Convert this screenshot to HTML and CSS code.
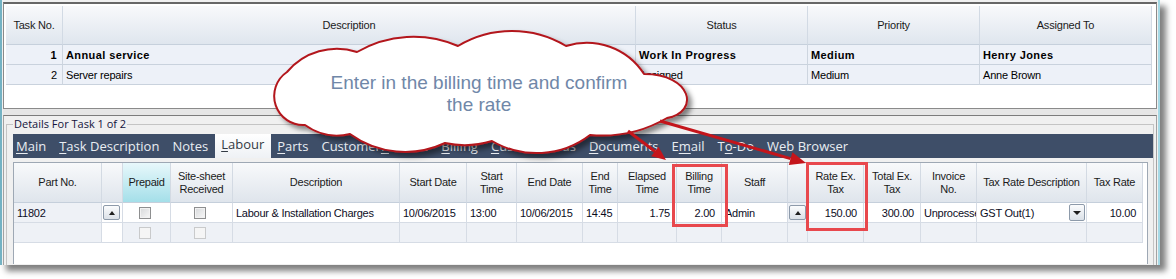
FILE: index.html
```html
<!DOCTYPE html>
<html>
<head>
<meta charset="utf-8">
<title>Task Details</title>
<link rel="stylesheet" href="styles.css">
</head>
<body>
<div class="stage">
  <div class="window">
    <div class="top-panel">
      <div class="tgrid">
        <div class="th">Task No.</div>
        <div class="th">Description</div>
        <div class="th">Status</div>
        <div class="th">Priority</div>
        <div class="th">Assigned To</div>
        <div class="td r b">1</div>
        <div class="td b">Annual service</div>
        <div class="td b">Work In Progress</div>
        <div class="td b">Medium</div>
        <div class="td b">Henry Jones</div>
        <div class="td r">2</div>
        <div class="td">Server repairs</div>
        <div class="td">Assigned</div>
        <div class="td">Medium</div>
        <div class="td">Anne Brown</div>
      </div>
    </div>
    <div class="splitter"></div>
    <div class="bottom-panel">
      <fieldset class="group">
        <legend>Details For Task 1 of 2</legend>
        <nav class="tabs">
          <span class="tab"><u>M</u>ain</span>
          <span class="tab"><u>T</u>ask Description</span>
          <span class="tab">Notes</span>
          <span class="tab active"><u>L</u>abour</span>
          <span class="tab"><u>P</u>arts</span>
          <span class="tab">Customer <u>R</u>eturns</span>
          <span class="tab"><u>B</u>illing</span>
          <span class="tab"><u>C</u>ustom Fields</span>
          <span class="tab"><u>D</u>ocuments</span>
          <span class="tab">E<u>m</u>ail</span>
          <span class="tab">T<u>o</u>-Do</span>
          <span class="tab">Web Browser</span>
        </nav>
        <div class="lgrid">
          <div class="lh">Part No.</div>
          <div class="lh"></div>
          <div class="lh sorted">Prepaid</div>
          <div class="lh">Site-sheet<br>Received</div>
          <div class="lh">Description</div>
          <div class="lh">Start Date</div>
          <div class="lh">Start<br>Time</div>
          <div class="lh">End Date</div>
          <div class="lh">End<br>Time</div>
          <div class="lh">Elapsed<br>Time</div>
          <div class="lh">Billing<br>Time</div>
          <div class="lh">Staff</div>
          <div class="lh"></div>
          <div class="lh">Rate Ex.<br>Tax</div>
          <div class="lh">Total Ex.<br>Tax</div>
          <div class="lh">Invoice<br>No.</div>
          <div class="lh">Tax Rate Description</div>
          <div class="lh">Tax Rate</div>

          <div class="lc shade">11802</div>
          <div class="lc btn"><span class="upbtn"></span></div>
          <div class="lc ctr"><span class="chk"></span></div>
          <div class="lc ctr"><span class="chk"></span></div>
          <div class="lc">Labour &amp; Installation Charges</div>
          <div class="lc">10/06/2015</div>
          <div class="lc">13:00</div>
          <div class="lc">10/06/2015</div>
          <div class="lc">14:45</div>
          <div class="lc r">1.75</div>
          <div class="lc r">2.00</div>
          <div class="lc">Admin</div>
          <div class="lc btn shade"><span class="upbtn"></span></div>
          <div class="lc r">150.00</div>
          <div class="lc r">300.00</div>
          <div class="lc clip">Unprocessed</div>
          <div class="lc dd"><span>GST Out(1)</span><span class="ddbtn"></span></div>
          <div class="lc r">10.00</div>

          <div class="lc shade"></div>
          <div class="lc"></div>
          <div class="lc ctr shade"><span class="chk off"></span></div>
          <div class="lc ctr shade"><span class="chk off"></span></div>
          <div class="lc shade"></div>
          <div class="lc shade"></div>
          <div class="lc shade"></div>
          <div class="lc shade"></div>
          <div class="lc shade"></div>
          <div class="lc shade"></div>
          <div class="lc shade"></div>
          <div class="lc shade"></div>
          <div class="lc shade"></div>
          <div class="lc shade"></div>
          <div class="lc shade"></div>
          <div class="lc shade"></div>
          <div class="lc shade"></div>
          <div class="lc shade"></div>
        </div>
      </fieldset>
    </div>
  </div>

  <svg class="overlay" width="1176" height="279" viewBox="0 0 1176 279">
    <defs>
      <filter id="shadow" x="-10%" y="-10%" width="130%" height="140%">
        <feDropShadow dx="4" dy="4" stdDeviation="2.5" flood-color="#000" flood-opacity="0.45"/>
      </filter>
    </defs>
    <path class="cloud" filter="url(#shadow)"
      d="M 287 72
         A 65 65 0 0 1 357 52
         A 112 112 0 0 1 458 46
         A 105 105 0 0 1 566 46
         A 68 68 0 0 1 644 74
         C 692 74 700 112 667 118
         A 130 130 0 0 1 590 135
         A 88 88 0 0 1 492 141
         A 93 93 0 0 1 445 143
         A 94 94 0 0 1 350 134
         A 55 55 0 0 1 305 125
         A 29 29 0 0 1 287 72 Z"/>
    <line class="arrow" x1="628" y1="131" x2="655" y2="151.5"/>
    <polygon class="head" points="666,160 651.2,156.3 658.5,146.7"/>
    <line class="arrow" x1="660" y1="121" x2="790.6" y2="158.6"/>
    <polygon class="head" points="806,163 788.8,164.9 792.4,152.3"/>
    <rect class="mark" x="673.5" y="165.5" width="53" height="60"/>
    <rect class="mark" x="807.5" y="163.5" width="59" height="66"/>
  </svg>
  <div class="cloud-text">Enter in the billing time and confirm<br>the rate</div>
</div>
</body>
</html>
```

FILE: styles.css
```css
* { box-sizing: border-box; }

body {
  margin: 0;
  background: #ffffff;
  font-family: "Liberation Sans", Arial, sans-serif;
}

.stage {
  position: relative;
  width: 1176px;
  height: 279px;
}

.window {
  width: 1160px;
  height: 265px;
  border-left: 2px solid #74b2c3;
  border-right: 2px solid #a6d9e5;
  padding-top: 2px;
  background: #f0f0f0;
  box-shadow: 6px 6px 6px rgba(0, 0, 0, 0.5);
  display: flex;
  flex-direction: column;
  overflow: hidden;
}

/* ---------- top task grid ---------- */
.top-panel {
  margin: 0 1px;
  height: 107px;
  border: 1px solid #8a8a8a;
  border-top: 2px solid #676767;
  padding: 2px;
  background: #ffffff;
}

.tgrid {
  display: grid;
  grid-template-columns: 57px 573px 172px 172px 172px;
  grid-template-rows: 39px 20px 20px;
  width: 1146px;
  font-size: 11px;
  letter-spacing: -0.2px;
  color: #000;
}

.th {
  display: flex;
  align-items: center;
  justify-content: center;
  background: linear-gradient(#f8f9fb, #dfe6ee);
  border-right: 1px solid #d2dae4;
  border-bottom: 1px solid #c6d0dc;
  color: #1b1b1b;
}

.td {
  display: flex;
  align-items: center;
  padding: 0 3px;
  background: #edf1f8;
  border-right: 1px solid #cdd5df;
  border-bottom: 1px solid #c9d2dd;
  white-space: nowrap;
  overflow: hidden;
}

.td.r { justify-content: flex-end; padding-right: 5px; }
.td.b { font-weight: bold; letter-spacing: 0.4px; }

.splitter {
  height: 6px;
  margin: 0 1px;
  background: #e6e6e6;
}

/* ---------- bottom details ---------- */
.bottom-panel {
  flex: 1;
  margin: 0 1px;
  border-top: 1px solid #7c7c7c;
  border-left: 1px solid #a2a2a2;
  border-right: 1px solid #a2a2a2;
  padding: 1px 2px 0 2px;
  background: #f0f0f0;
}

.group {
  margin: 0;
  padding: 3px 0 0 6px;
  border: 1px solid #c4c4c4;
  border-bottom: none;
  min-width: 0;
  height: 100%;
}

.group legend {
  padding: 0 1px;
  font-family: "Open Sans", "Liberation Sans", sans-serif;
  font-size: 11px;
  line-height: 14px;
  color: #14143c;
}

.tabs {
  display: flex;
  align-items: stretch;
  height: 24px;
  background: #3e4e68;
  font-family: "Open Sans", "Liberation Sans", sans-serif;
  font-size: 13px;
  color: #e9edf2;
  white-space: nowrap;
  overflow: hidden;
}

.tab {
  display: flex;
  align-items: center;
  padding: 0 6.5px 1px 6.5px;
}

.tab:first-child { padding-left: 3px; }

.tab u { text-underline-offset: 2px; }

.tab.active {
  background: linear-gradient(#ffffff, #eef1f5);
  color: #333a44;
  padding-bottom: 4px;
}

.lgrid {
  display: grid;
  grid-template-columns: 88px 21px 48px 62px 167px 67px 50px 66px 35px 59px 45px 66px 20px 56px 57px 56px 110px 56px;
  grid-template-rows: 40px 20px 20px;
  align-content: start;
  margin-top: 4px;
  margin-right: 5px;
  height: 102px;
  border: 1px solid #9ea8b4;
  border-bottom: none;
  background: #ffffff;
  font-size: 11px;
  letter-spacing: -0.25px;
  color: #000;
}

.lh {
  display: flex;
  align-items: center;
  justify-content: center;
  text-align: center;
  line-height: 13px;
  background: linear-gradient(#f8f9fb, #dfe5ec);
  border-right: 1px solid #d3dae3;
  border-bottom: 1px solid #c5cfdb;
  color: #1b1b1b;
}

.lh.sorted {
  background: linear-gradient(#e8f8fb, #a4dfe9);
}

.lc {
  display: flex;
  align-items: center;
  padding: 0 3px;
  border-right: 1px solid #d6dce5;
  border-bottom: 1px solid #d6dce5;
  white-space: nowrap;
  overflow: hidden;
  color: #0d0d1e;
}

.lc.shade { background: #eef1f6; }
.lc.r { justify-content: flex-end; padding-right: 6px; }
.lc.ctr { justify-content: center; padding: 0 4px 0 0; }
.lc.btn { padding: 0 0 0 1px; }
.lc.clip { padding-right: 0; }
.lc.dd { justify-content: space-between; padding-right: 0; }

.chk {
  width: 12px;
  height: 12px;
  border: 1px solid #8e8f90;
  background: linear-gradient(135deg, #d6d8da, #f8f8f8);
  box-shadow: inset 0 0 0 1px #f2f2f2;
}

.chk.off {
  border-color: #c9cacb;
  background: #f5f5f5;
  box-shadow: none;
}

.upbtn, .ddbtn {
  display: flex;
  align-items: center;
  justify-content: center;
  flex-shrink: 0;
  border: 1px solid #8d9aaa;
  border-radius: 2px;
  background: linear-gradient(#fbfcfd, #dbe1e8);
}

.upbtn {
  width: 17px;
  height: 15px;
}

.upbtn::after {
  content: "";
  border-left: 3.5px solid transparent;
  border-right: 3.5px solid transparent;
  border-bottom: 4px solid #1e1e1e;
}

.ddbtn {
  width: 16px;
  height: 17px;
  margin-right: 1px;
}

.ddbtn::after {
  content: "";
  border-left: 4px solid transparent;
  border-right: 4px solid transparent;
  border-top: 4px solid #1e1e1e;
}

/* ---------- annotation overlay ---------- */
.overlay {
  position: absolute;
  left: 0;
  top: 0;
  pointer-events: none;
}

.cloud {
  fill: #ffffff;
  stroke: #b3161c;
  stroke-width: 2;
  stroke-linejoin: round;
}

.arrow {
  stroke: #c4151b;
  stroke-width: 3;
}

.head { fill: #c4151b; }

.mark {
  fill: none;
  stroke: #e8484d;
  stroke-width: 3;
}

.cloud-text {
  position: absolute;
  left: 329px;
  top: 72px;
  width: 300px;
  text-align: center;
  font-family: "Liberation Sans", Arial, sans-serif;
  font-size: 19px;
  line-height: 22px;
  color: #7087a8;
}
```
